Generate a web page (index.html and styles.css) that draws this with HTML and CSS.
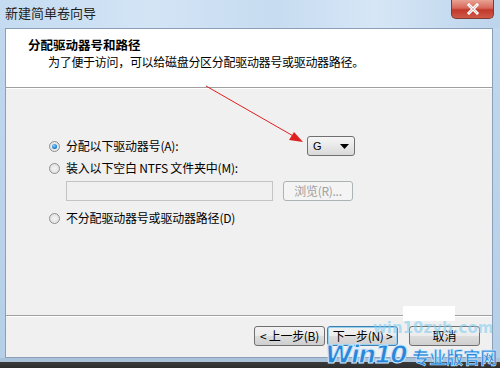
FILE: index.html
```html
<!DOCTYPE html>
<html>
<head>
<meta charset="utf-8">
<link rel="stylesheet" href="styles.css">
</head>
<body>
<div class="window">
  <div class="titlebar">
    <span class="title">新建简单卷向导</span>
    <div class="close"><svg width="14" height="12" viewBox="0 0 14 12"><path d="M3 2 L11 10 M11 2 L3 10" stroke="#fff" stroke-width="3" stroke-linecap="square"/><path d="M3 2 L11 10 M11 2 L3 10" stroke="#7a2a20" stroke-width="0.6" fill="none" opacity="0.5"/></svg></div>
  </div>
  <div class="client">
    <div class="header">
      <div class="h-title">分配驱动器号和路径</div>
      <div class="h-sub">为了便于访问，可以给磁盘分区分配驱动器号或驱动器路径。</div>
    </div>
    <div class="body">
      <div class="row r1">
        <span class="radio checked"></span>
        <span class="label">分配以下驱动器号(A):</span>
        <div class="combo"><span>G</span><svg width="9" height="5" viewBox="0 0 9 5"><path d="M0 0 H9 L4.5 5 Z" fill="#000"/></svg></div>
      </div>
      <div class="row r2">
        <span class="radio"></span>
        <span class="label">装入以下空白 NTFS 文件夹中(M):</span>
      </div>
      <div class="row r3">
        <div class="input"></div>
        <div class="btn disabled">浏览(R)...</div>
      </div>
      <div class="row r4">
        <span class="radio"></span>
        <span class="label">不分配驱动器号或驱动器路径(D)</span>
      </div>
    </div>
    <div class="footer">
      <div class="btn nav">&lt; 上一步(B)</div>
      <div class="btn nav next">下一步(N) &gt;</div>
      <div class="btn cancel">取消</div>
    </div>
  </div>
  <div class="desk"></div>

  <svg class="arrow" width="110" height="70" viewBox="0 0 110 70">
    <line x1="3" y1="2" x2="92" y2="53" stroke="#e02020" stroke-width="1"/>
    <path d="M100 58 L86 56 L91 48 Z" fill="#e02020"/>
  </svg>
  <div class="wm-white"></div>
  <div class="wm-url">win10zyb.com</div>
  <div class="wm-brand"><span class="wm-win">Win10</span><span class="wm-cn">专业版官网</span></div>
</div>
</body>
</html>
```

FILE: styles.css
```css
html, body {
  margin: 0;
  padding: 0;
}
body {
  width: 500px;
  height: 368px;
  overflow: hidden;
  font-family: "Noto Sans CJK SC", "Liberation Sans", sans-serif;
  font-size: 12px;
  color: #000;
}
.window {
  position: relative;
  width: 500px;
  height: 368px;
  overflow: hidden;
  background: linear-gradient(180deg, #c2d9ef 0%, #bcd4ec 40%, #b6cfe8 100%);
  display: flex;
  flex-direction: column;
}
.titlebar {
  height: 28px;
  flex: none;
  display: flex;
  align-items: flex-start;
  background: linear-gradient(90deg, #c4dbf1 0%, #d3e4f5 30%, #c7dcf1 55%, #d6e6f6 75%, #bcd4ec 100%);
}
.title {
  margin: 3px 0 0 5px;
  font-family: "Noto Sans CJK SC", sans-serif;
  font-size: 13px;
  line-height: 20px;
  color: #1e1e1e;
}
.close {
  margin-left: auto;
  margin-right: 6px;
  width: 43px;
  height: 19px;
  border: 1px solid #7e3a33;
  border-top: none;
  border-radius: 0 0 5px 5px;
  background: linear-gradient(180deg, #e8a393 0%, #d7675a 45%, #c0392b 55%, #cf5a48 100%);
  display: flex;
  align-items: center;
  justify-content: center;
  box-sizing: border-box;
}
.client {
  margin: 0 7px 0 5px;
  height: 330px;
  flex: none;
  border: 1px solid #8aa0b8;
  box-sizing: border-box;
  background: #f0f0f0;
  display: flex;
  flex-direction: column;
}
.header {
  height: 58px;
  flex: none;
  background: #fff;
  border-bottom: 1px solid #a0a0a0;
  box-shadow: 0 1px 0 #fff;
}
.h-title {
  margin: 8px 0 0 22px;
  font-weight: bold;
  font-size: 12.5px;
  line-height: 16px;
}
.h-sub {
  margin: 1px 0 0 42px;
  font-size: 12px;
  line-height: 16px;
  letter-spacing: -0.3px;
}
.body {
  flex: 1;
  position: relative;
  padding-left: 43px;
  border-bottom: 1px solid #a0a0a0;
  box-shadow: 0 1px 0 #fff;
}
.row {
  display: flex;
  align-items: center;
}
.r1 { margin-top: 47px; height: 22px; }
.r2 { margin-top: 3px; height: 16px; }
.r3 { margin-top: 5px; margin-left: 17px; height: 20px; }
.r4 { margin-top: 9px; height: 16px; }
.radio {
  width: 11px;
  height: 11px;
  border-radius: 50%;
  border: 1px solid #8e8f8f;
  background: radial-gradient(circle, #f4f4f4 0%, #dcdcdc 100%);
  box-sizing: border-box;
  flex: none;
  position: relative;
}
.radio.checked::after {
  content: "";
  position: absolute;
  left: 2px;
  top: 2px;
  width: 5px;
  height: 5px;
  border-radius: 50%;
  background: radial-gradient(circle at 40% 35%, #8ed0ff 0%, #1d7fd0 60%, #0b4f99 100%);
}
.label {
  margin-left: 6px;
  font-size: 12px;
  line-height: 16px;
  letter-spacing: -0.2px;
}
.combo {
  margin-left: auto;
  margin-right: 137px;
  width: 48px;
  height: 20px;
  box-sizing: border-box;
  border: 1px solid #707070;
  border-radius: 3px;
  background: linear-gradient(180deg, #f6f6f6 0%, #e8e8e8 50%, #d9d9d9 100%);
  display: flex;
  align-items: center;
  justify-content: space-between;
  padding: 0 5px 0 5px;
  font-family: "Liberation Sans", sans-serif;
  font-size: 11px;
}
.input {
  width: 207px;
  height: 20px;
  box-sizing: border-box;
  border: 1px solid #c4c4c4;
  background: #f0f0f0;
}
.btn {
  height: 20px;
  box-sizing: border-box;
  border: 1px solid #707070;
  border-radius: 3px;
  background: linear-gradient(180deg, #f2f2f2 0%, #ebebeb 50%, #dddddd 50%, #cfcfcf 100%);
  display: flex;
  align-items: center;
  justify-content: center;
  font-size: 12px;
  line-height: 16px;
  white-space: nowrap;
}
.btn.disabled {
  margin-left: 10px;
  width: 70px;
  border-color: #adb2b5;
  background: #f4f4f4;
  color: #a0a0a0;
  letter-spacing: -0.3px;
}
.footer {
  flex: none;
  height: 41px;
  display: flex;
  align-items: center;
  padding-bottom: 1px;
  box-sizing: border-box;
  padding-left: 248px;
}
.btn.nav {
  width: 71px;
  letter-spacing: -0.3px;
}
.btn.next {
  margin-left: 2px;
  border-color: #3c7fb1;
  box-shadow: inset 0 0 0 1px #98d1ef;
}
.btn.cancel {
  margin-left: 11px;
  width: 71px;
}
.desk {
  flex: 1;
  background: linear-gradient(180deg, #a9c2da 0%, #a9c2da 40%, #3a3a3a 40%, #2e2e2e 100%);
}
.arrow {
  position: absolute;
  left: 203px;
  top: 84px;
}
.wm-white {
  position: absolute;
  left: 403px;
  top: 306px;
  width: 52px;
  height: 15px;
  background: #fff;
}
.wm-url {
  position: absolute;
  left: 373px;
  top: 318px;
  font-family: "DejaVu Sans", sans-serif;
  font-weight: bold;
  font-size: 15px;
  line-height: 20px;
  color: rgba(130, 205, 240, 0.6);
  white-space: nowrap;
}
.wm-brand {
  position: absolute;
  left: 325px;
  top: 342px;
  display: flex;
  align-items: flex-end;
  white-space: nowrap;
  height: 26px;
}
.wm-win {
  font-family: "DejaVu Sans", sans-serif;
  font-style: italic;
  font-weight: bold;
  font-size: 25px;
  line-height: 26px;
  color: #2a86d8;
  letter-spacing: -1.5px;
  -webkit-text-stroke: 1px #cfe8ff;
}
.wm-cn {
  margin-left: 6px;
  font-family: "Noto Sans CJK SC", sans-serif;
  font-weight: bold;
  font-size: 17px;
  line-height: 22px;
  color: #2a86d8;
  -webkit-text-stroke: 0.6px #cfe8ff;
}
```
